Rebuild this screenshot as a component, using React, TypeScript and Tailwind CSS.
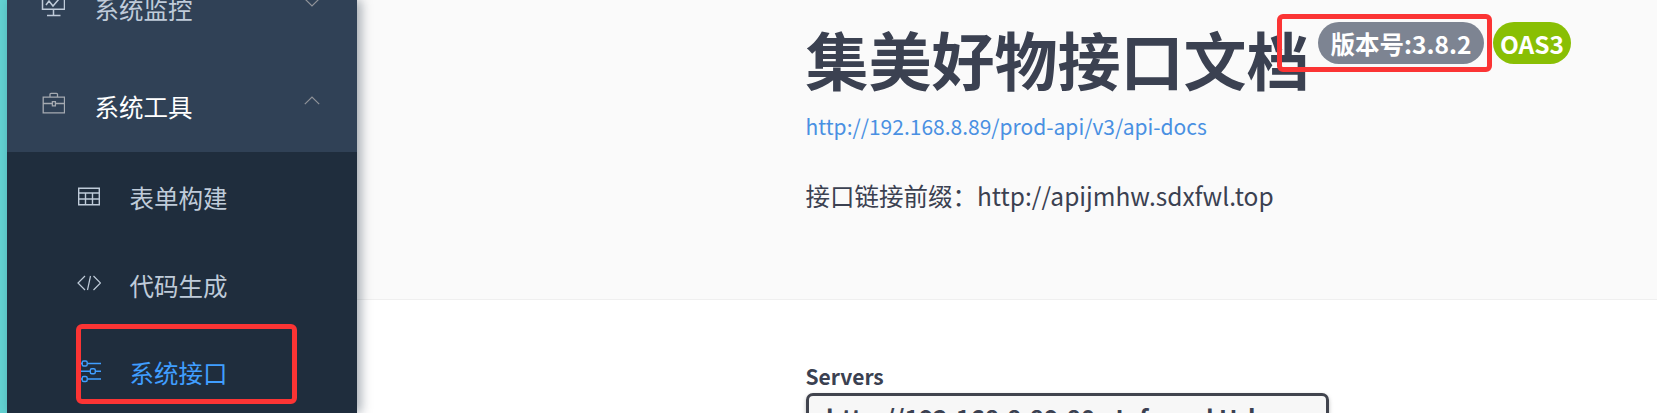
import type { ReactNode } from "react";

function Icon({ children, className = "" }: { children: ReactNode; className?: string }) {
  return (
    <svg viewBox="0 0 24 24" fill="none" stroke="currentColor" className={`h-6 w-6 shrink-0 ${className}`}>
      {children}
    </svg>
  );
}

function SubItem({ label, icon, active = false }: { label: string; icon: ReactNode; active?: boolean }) {
  return (
    <li className={`flex h-[87.5px] items-center pl-[70px] ${active ? "text-[#409eff]" : "text-[#bfcbd9]"}`}>
      {icon}
      <span className="ml-[28.5px] pt-[4px] leading-[83.5px]">{label}</span>
    </li>
  );
}

function Sidebar() {
  return (
    <nav className="relative z-10 h-[413px] w-[350px] shrink-0 overflow-hidden bg-[#304156] text-[24.5px]">
      <div className="-mt-[35px] flex h-[87.5px] items-center pl-[34px] text-[#bfcbd9]">
        <Icon className="-mt-[8px]">
          <path strokeWidth="1.5" d="M1.5 2v14.2h22V2M12.5 16.5v6M6 22.5h13.500M5 12l3-4 4 5 6-7" />
        </Icon>
        <span className="ml-[29.5px] leading-[87.5px]">系统监控</span>
        <svg viewBox="0 0 16 9" className="-mt-[12px] ml-auto mr-[37px] h-[9px] w-4" fill="none" stroke="#909399" strokeWidth="1.2">
          <path d="m.8.8 7.200 7.200L15.200.8" />
        </svg>
      </div>
      <div className="mt-[12px] flex h-[87.5px] items-center pl-[34px] text-[#f4f4f5]">
        <Icon className="-mt-[10px] text-[#a5aab1]">
          <path strokeWidth="1.3" d="M2.200 6.200h21.300v15.700H2.200zM9 6.200V3.300q0-1 1-1h5.500q1 0 1 1v2.900M2.200 12.500h9M14.600 12.500h8.900M11.400 10.700h3v4.200h-3z" />
        </Icon>
        <span className="-mt-[3px] ml-[29.5px] leading-[84px] text-white">系统工具</span>
        <svg viewBox="0 0 16 9" className="-mt-[16px] ml-auto mr-[37px] h-[9px] w-4" fill="none" stroke="#909399" strokeWidth="1.2">
          <path d="M.8 8.200 8 1l7.200 7.200" />
        </svg>
      </div>
      <ul className="bg-[#1f2d3d]">
        <SubItem
          label="表单构建"
          icon={
            <Icon>
              <path strokeWidth="1.4" d="M1.700 4.200h20.600v16.500H1.700zM1.700 9h20.600M1.700 15h20.600M8.500 9v11.700M15.500 9v11.700" />
            </Icon>
          }
        />
        <SubItem
          label="代码生成"
          icon={
            <Icon>
              <path strokeWidth="1.2" d="m8 5-7 7 7 7M16.500 5l7 7-7 7M13.500 5l-3 14" />
            </Icon>
          }
        />
        <SubItem
          label="系统接口"
          active
          icon={
            <Icon>
              <path strokeWidth="1.4" d="M0 4.500h5M10.500 4.500H24M0 12.300h13M18.500 12.300H24M0 20h5M10.500 20H24" />
              <rect x="5.200" y="2" width="5" height="5" rx="1.500" strokeWidth="1.400" />
              <rect x="13.300" y="9.800" width="5" height="5" rx="1.500" strokeWidth="1.400" />
              <rect x="5.200" y="17.500" width="5" height="5" rx="1.500" strokeWidth="1.400" />
            </Icon>
          }
        />
      </ul>
      <div className="absolute left-[69px] top-[324px] h-[80px] w-[221px] rounded-[6px] border-[5px] border-[#fb3434]" />
    </nav>
  );
}

export default function App() {
  return (
    <div className="flex h-[413px] w-[1657px] overflow-hidden bg-white font-['Noto_Sans_CJK_SC',sans-serif] text-[#3b4151]">
      <div className="w-[7px] shrink-0 bg-[#62d2d2]" />
      <div className="z-10 shrink-0 shadow-[3.5px_0_10.5px_rgba(0,21,41,0.35)]">
        <Sidebar />
      </div>
      <main className="min-w-0 flex-1">
        <header className="relative h-[300px] border-b border-[#efefef] bg-[#fafafa] pl-[448.5px]">
          <div className="flex items-start">
            <h1 className="mt-[12px] whitespace-nowrap text-[63px] font-bold leading-[92px]">集美好物接口文档</h1>
            <span className="ml-[8.5px] mt-[22px] flex h-[42px] w-[166px] items-center justify-center rounded-full bg-[#7d8492] pt-[2px] text-[24.5px] font-bold leading-[40px] text-white">
              版本号:3.8.2
            </span>
            <span className="ml-[9px] mt-[22px] flex h-[42px] w-[78px] items-center justify-center rounded-full bg-[#89bf04] pt-[2px] text-[24.5px] font-bold leading-[40px] text-white">
              OAS3
            </span>
          </div>
          <a className="mt-[7px] block text-[21px] leading-[30px] text-[#4990e2]">http://192.168.8.89/prod-api/v3/api-docs</a>
          <p className="mt-[37px] text-[24.5px] leading-[36px]">接口链接前缀：http://apijmhw.sdxfwl.top</p>
          <div className="absolute left-[920px] top-[14px] h-[58px] w-[215px] rounded-[6px] border-[5px] border-[#fb3434]" />
        </header>
        <section className="pl-[449px] pt-[61px]">
          <div className="-ml-[0.5px] text-[21px] font-bold leading-[30px]">Servers</div>
          <div className="mt-[2px] h-[66px] w-[523px] rounded-[7px] border-[3px] border-[#41444e] bg-[#f7f7f7] pl-[17px] pt-[4px] text-[24.5px] font-bold leading-[36px] shadow-[0_2px_4px_rgba(0,0,0,0.25)]">
            http://192.168.8.89:80 - Inferred Url
          </div>
        </section>
      </main>
    </div>
  );
}
